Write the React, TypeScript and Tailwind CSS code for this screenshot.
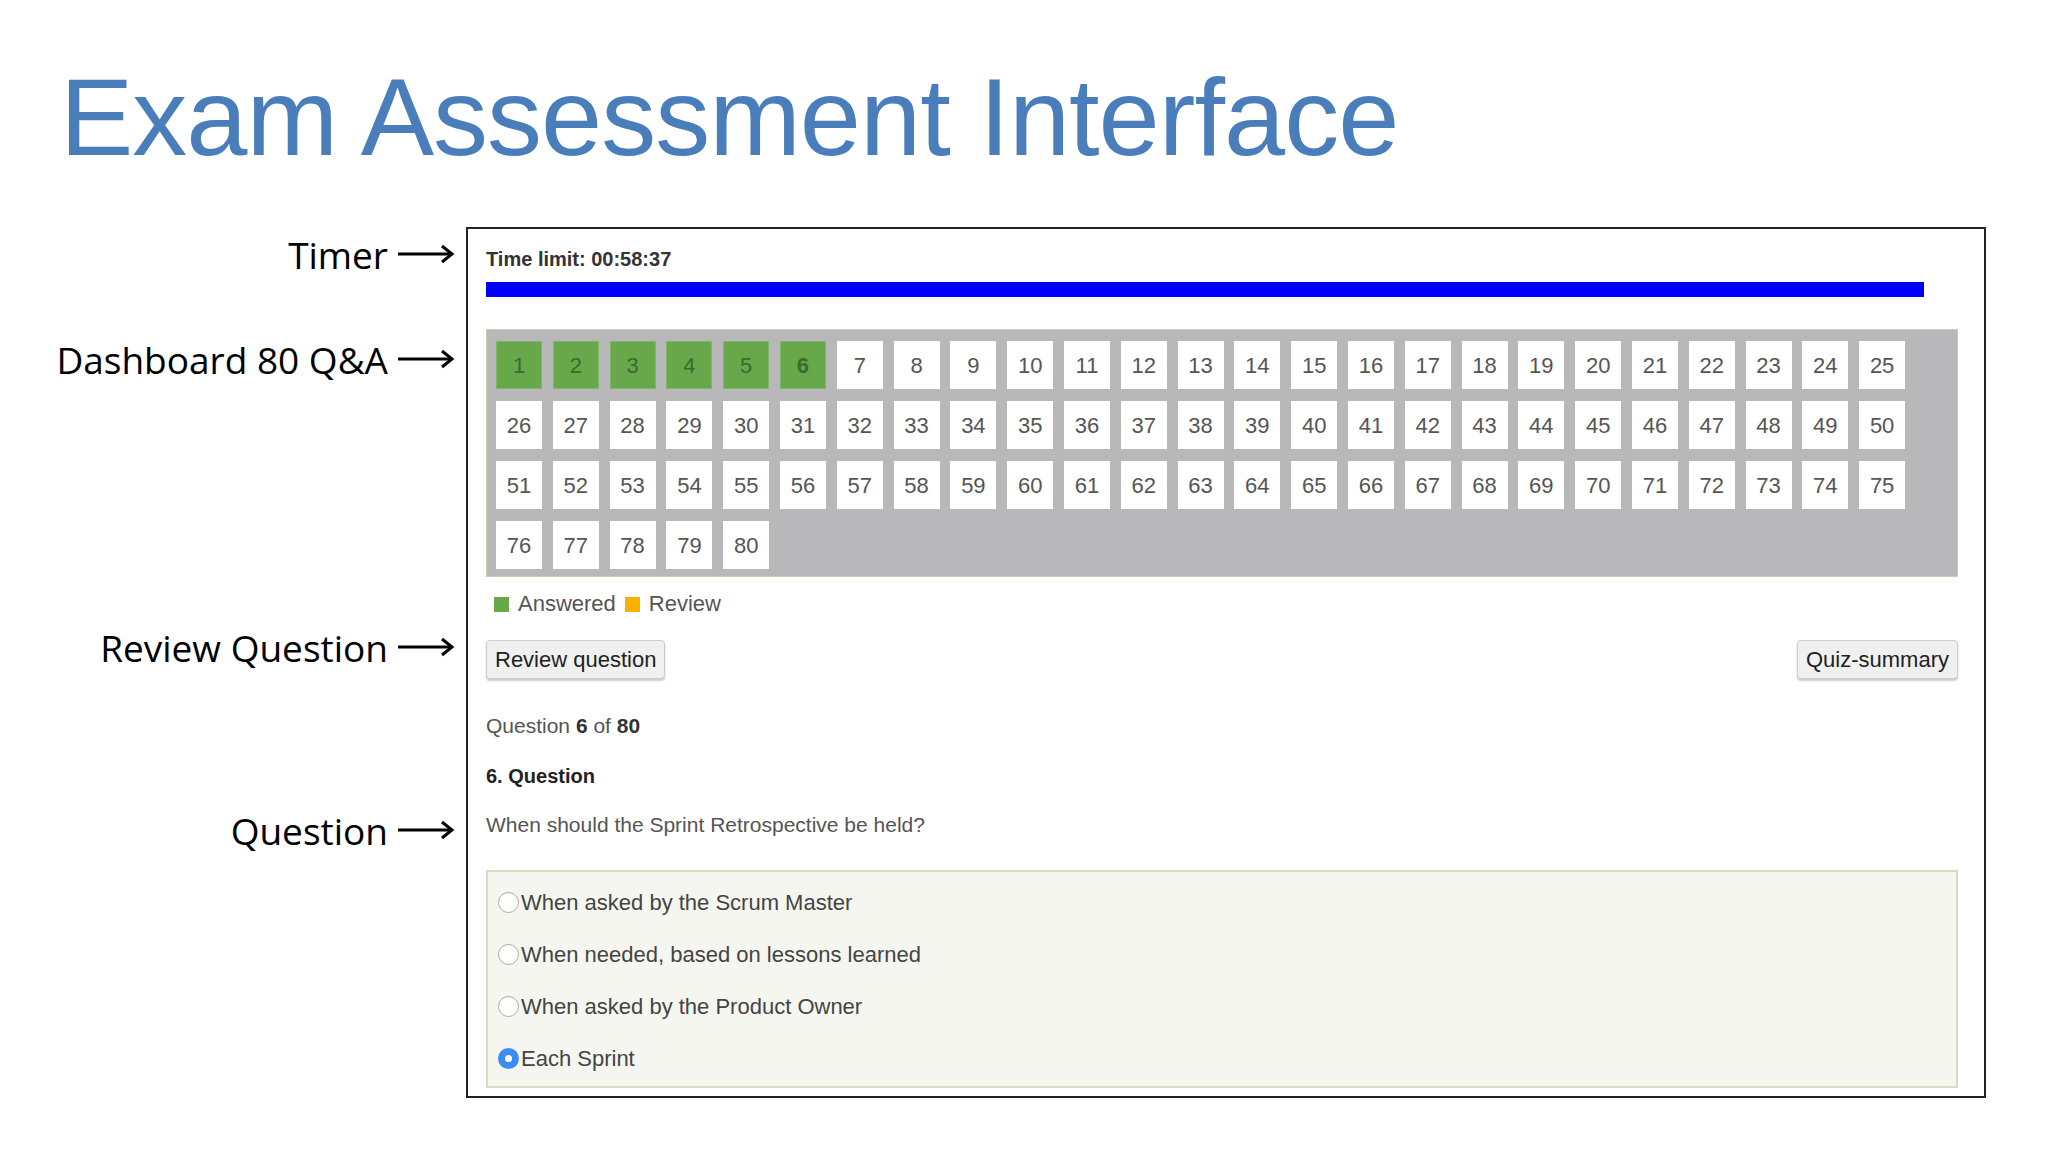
import React from 'react';

const Arrow = () => (
  <svg width="60" height="22" viewBox="0 0 60 22" className="shrink-0">
    <path d="M2 11H56" stroke="#000" strokeWidth="3" />
    <path d="M46 3l10 8-10 8" fill="none" stroke="#000" strokeWidth="3" />
  </svg>
);

const Label = ({ text, mt }: { text: string; mt: string }) => (
  <div className={`flex h-[40px] items-center justify-end gap-[8px] ${mt}`}>
    <span className="text-[37px] leading-none text-black">{text}</span>
    <Arrow />
  </div>
);

const cells = Array.from({ length: 80 }, (_, i) => i + 1);

export default function App() {
  return (
    <div className="w-[2048px] h-[1152px] bg-white overflow-hidden" style={{ fontFamily: '"Liberation Sans", Arial, sans-serif' }}>
      <h1 className="pl-[60px] pt-[62px] text-[110px] leading-none text-[#4a7ebb] tracking-[-1px]">
        Exam Assessment Interface
      </h1>
      <div className="flex mt-[55px]">
        <div className="w-[466px] shrink-0 flex flex-col pr-[10px]" style={{ fontFamily: '"Open Sans", sans-serif' }}>
          <Label text="Timer" mt="mt-[7px]" />
          <Label text="Dashboard 80 Q&A" mt="mt-[65px]" />
          <Label text="Review Question" mt="mt-[248px]" />
          <Label text="Question" mt="mt-[143px]" />
        </div>
        <div className="w-[1520px] h-[871px] border-[2px] border-[#222] pl-[18px] pt-[18px]">
          <div className="text-[20px] leading-[24px] font-bold text-[#333]">Time limit: 00:58:37</div>
          <div className="mt-[11px] h-[15px] w-[1438px] bg-[#0000ff]" />
          <div className="mt-[32px] w-[1472px] h-[248px] bg-[#b8b8ba] border border-[#c9cdb0] pl-[9px] pt-[11px]">
            <div className="grid grid-cols-[repeat(25,46px)] gap-x-[10.8px] gap-y-[12px]">
              {cells.map((n) => (
                <div
                  key={n}
                  className={`h-[48px] flex items-center justify-center text-[22px] ${
                    n <= 6 ? 'bg-[#66a84a] text-[#3e6a2c] border border-[#7fb865]' : 'bg-white text-[#555]'
                  } ${n === 6 ? 'border-[#6e9bc0] font-bold text-[#2f4a22]' : ''}`}
                >
                  {n}
                </div>
              ))}
            </div>
          </div>
          <div className="mt-[14px] flex items-center text-[22px] leading-[26px] text-[#555] pl-[8px]">
            <span className="w-[15px] h-[15px] bg-[#66a84a] mr-[9px]" />
            <span>Answered</span>
            <span className="w-[15px] h-[15px] bg-[#fbb000] ml-[9px] mr-[9px]" />
            <span>Review</span>
          </div>
          <div className="mt-[23px] flex justify-between w-[1472px]">
            <button className="h-[39px] px-[8px] text-[22px] text-[#222] bg-[#f0f0f0] border border-[#ccc] rounded-[4px] shadow-[0_2px_2px_rgba(0,0,0,0.2)]">
              Review question
            </button>
            <button className="h-[39px] px-[8px] text-[22px] text-[#222] bg-[#f0f0f0] border border-[#ccc] rounded-[4px] shadow-[0_2px_2px_rgba(0,0,0,0.2)]">
              Quiz-summary
            </button>
          </div>
          <div className="mt-[34px] text-[21px] leading-[26px] text-[#555]">
            Question <b className="text-[#333]">6</b> of <b className="text-[#333]">80</b>
          </div>
          <div className="mt-[24px] text-[20px] leading-[26px] font-bold text-[#222]">6. Question</div>
          <div className="mt-[23px] text-[21px] leading-[26px] text-[#555]">When should the Sprint Retrospective be held?</div>
          <div className="mt-[32px] w-[1472px] h-[218px] bg-[#f6f6f1] border-[2px] border-[#d8dcc4] pt-[4px] pl-[10px]">
            {['When asked by the Scrum Master', 'When needed, based on lessons learned', 'When asked by the Product Owner', 'Each Sprint'].map((t, i) => (
              <div key={t} className="h-[52px] flex items-center text-[22px] text-[#444]">
                {i === 3 ? (
                  <span className="w-[21px] h-[21px] rounded-full bg-[#3b8df0] flex items-center justify-center mr-[2px]">
                    <span className="w-[7px] h-[7px] rounded-full bg-white" />
                  </span>
                ) : (
                  <span className="w-[21px] h-[21px] rounded-full bg-white border border-[#aaa] mr-[2px]" />
                )}
                {t}
              </div>
            ))}
          </div>
        </div>
      </div>
    </div>
  );
}
